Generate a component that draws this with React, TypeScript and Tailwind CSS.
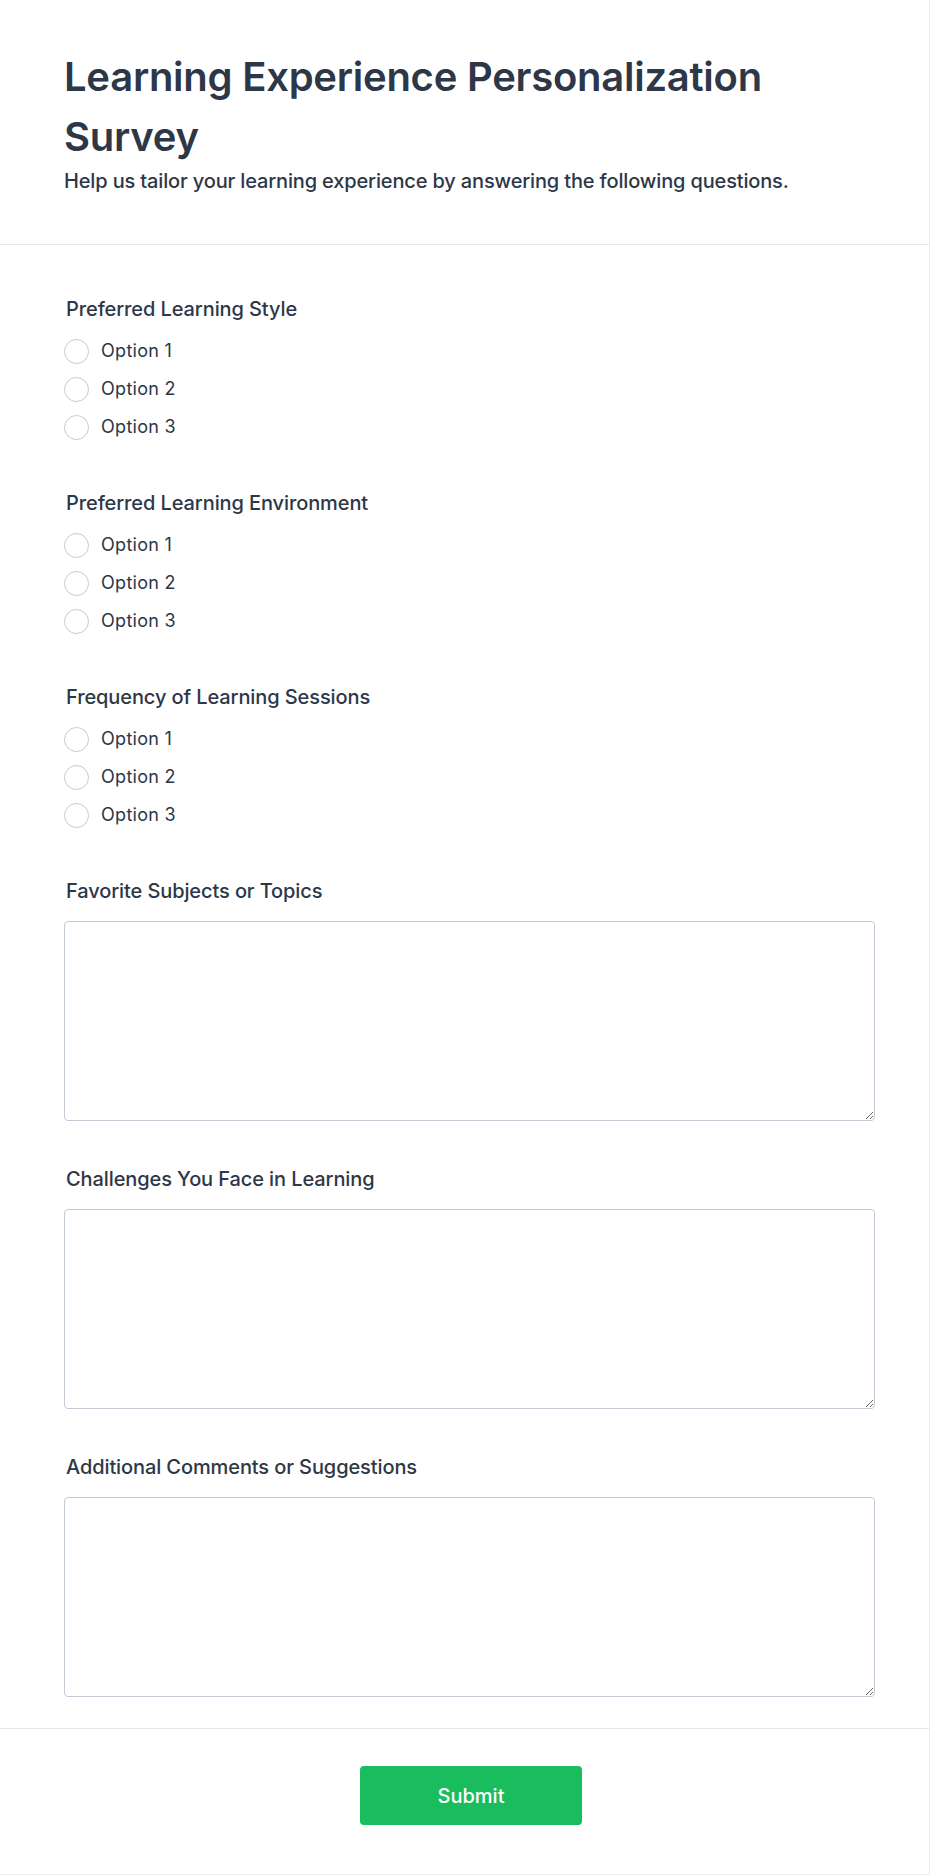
import React from "react";

const radioQuestions = [
  "Preferred Learning Style",
  "Preferred Learning Environment",
  "Frequency of Learning Sessions",
];

const textQuestions = [
  "Favorite Subjects or Topics",
  "Challenges You Face in Learning",
  "Additional Comments or Suggestions",
];

function RadioQuestion({ label, first }: { label: string; first: boolean }) {
  return (
    <div className={first ? "" : "mt-12"}>
      <p className="pl-[2px] text-xl leading-7 font-medium tracking-[-0.1px]">{label}</p>
      <div className="mt-[14px] flex flex-col gap-[10px]">
        {["Option 1", "Option 2", "Option 3"].map((o) => (
          <label key={o} className="flex h-7 items-center">
            <span className="block h-[25px] w-[25px] rounded-full border-[1.5px] border-[#c3cbd6] bg-white" />
            <span className="ml-3 text-lg leading-7 tracking-[0.3px]">{o}</span>
          </label>
        ))}
      </div>
    </div>
  );
}

function TextQuestion({ label, first }: { label: string; first: boolean }) {
  return (
    <div className={first ? "mt-12" : "mt-[44px]"}>
      <p className="pl-[2px] text-xl leading-7 font-medium tracking-[-0.1px]">{label}</p>
      <textarea className="mt-4 block h-[200px] w-full rounded-[4px] border border-[#c3cbd6] bg-white" />
    </div>
  );
}

export default function App() {
  return (
    <div className="h-[1875px] w-[930px] border-r border-b border-[#eceef2] bg-white font-['Inter',sans-serif] text-[#2d3748]">
      <header className="border-b border-[#e2e8f0] pt-[47px] pb-[49px] pl-16 pr-[54px]">
        <h1 className="text-[40px] leading-[60px] font-semibold tracking-[-0.25px]">
          Learning Experience Personalization Survey
        </h1>
        <p className="text-xl leading-7 font-medium tracking-[-0.15px]">
          Help us tailor your learning experience by answering the following questions.
        </p>
      </header>
      <section className="border-b border-[#e2e8f0] pt-[50px] pb-[31px] pl-16 pr-[54px]">
        {radioQuestions.map((q, i) => (
          <RadioQuestion key={q} label={q} first={i === 0} />
        ))}
        {textQuestions.map((q, i) => (
          <TextQuestion key={q} label={q} first={i === 0} />
        ))}
      </section>
      <footer className="flex justify-center pt-[37px] pl-[67px] pr-[54px]">
        <button className="h-[59px] w-[222px] rounded-[4px] bg-[#1abd5d] text-xl font-medium text-white">
          Submit
        </button>
      </footer>
    </div>
  );
}
